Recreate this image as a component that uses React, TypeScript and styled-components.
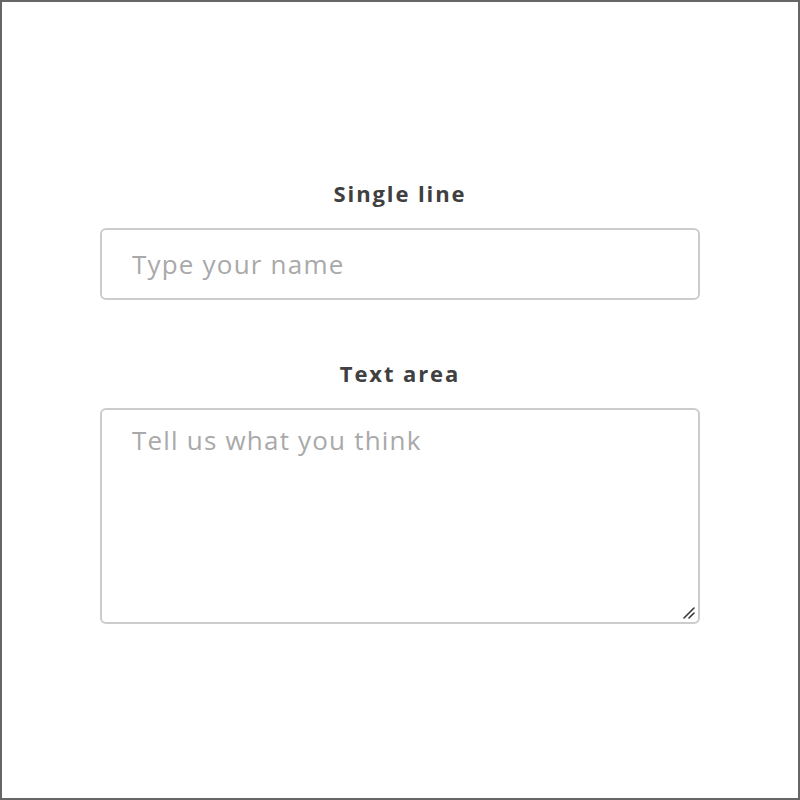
import React from "react";
import styled, { createGlobalStyle } from "styled-components";

const GlobalStyle = createGlobalStyle`
  html, body { margin: 0; padding: 0; background: #ffffff; }
  * { box-sizing: border-box; }
`;

const Page = styled.div`
  width: 800px;
  height: 800px;
  border: 2px solid #666666;
  background: #ffffff;
  display: flex;
  align-items: center;
  justify-content: center;
`;

const Form = styled.form`
  width: 600px;
  display: flex;
  flex-direction: column;
  gap: 61px;
  margin-top: 4px;
`;

const Field = styled.div`
  display: flex;
  flex-direction: column;
  gap: 23px;
`;

const Label = styled.label`
  display: block;
  text-align: center;
  font-family: "Open Sans", "Lato", sans-serif;
  font-weight: 700;
  font-size: 22px;
  line-height: 24px;
  letter-spacing: 1.9px;
  color: #404040;
`;

const fieldBase = `
  width: 100%;
  border: 2px solid #cccccc;
  border-radius: 6px;
  background: #ffffff;
  font-family: "Open Sans", "Noto Sans", sans-serif;
  font-size: 26px;
  letter-spacing: 1.2px;
  color: #333333;
  outline: none;
  padding: 0 30px;
  &::placeholder { color: #a9a9a9; opacity: 1; }
`;

const TextInput = styled.input`
  ${fieldBase}
  height: 72px;
`;

const AreaWrap = styled.div`
  position: relative;
  width: 100%;
`;

const TextArea = styled.textarea`
  ${fieldBase}
  height: 216px;
  padding-top: 13px;
  line-height: 34px;
  resize: vertical;
  display: block;
  &::-webkit-resizer {
    background: transparent;
  }
`;

const Grip = styled.svg`
  position: absolute;
  right: 4px;
  bottom: 5px;
  width: 14px;
  height: 14px;
  pointer-events: none;
`;

export default function App() {
  return (
    <>
      <GlobalStyle />
      <Page>
        <Form onSubmit={(e) => e.preventDefault()}>
          <Field>
            <Label htmlFor="single">Single line</Label>
            <TextInput id="single" type="text" placeholder="Type your name" />
          </Field>
          <Field>
            <Label htmlFor="area">Text area</Label>
            <AreaWrap>
              <TextArea id="area" placeholder="Tell us what you think" />
              <Grip viewBox="0 0 14 14" aria-hidden="true">
                <path d="M2 13 L12 3 M7 13 L12 8" stroke="#3a3a3a" strokeWidth="1.6" strokeLinecap="round" fill="none" />
              </Grip>
            </AreaWrap>
          </Field>
        </Form>
      </Page>
    </>
  );
}
